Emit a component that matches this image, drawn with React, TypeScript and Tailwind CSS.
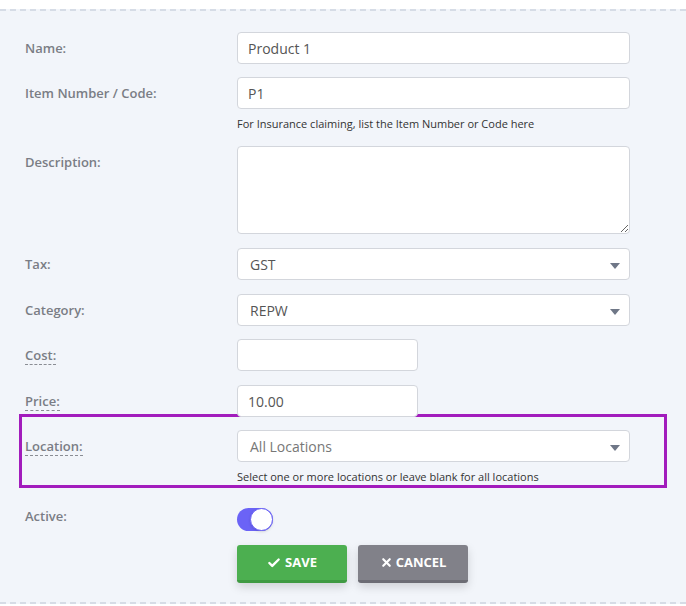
import { Check, X } from "lucide-react";

const labelCls =
  "w-[212px] shrink-0 text-[13px] font-semibold leading-[32px] text-[#7a7d85]";
const inputCls =
  "h-[32px] rounded-[4px] border border-[#d3d6dc] bg-white px-[10px] text-[14px] text-[#555] outline-none";

function Caret() {
  return (
    <svg width="10" height="6" viewBox="0 0 10 6" className="absolute right-[9px] top-[14px]">
      <path d="M0 0h10L5 6z" fill="#6f7787" />
    </svg>
  );
}

function SelectBox({ value, muted }: { value: string; muted?: boolean }) {
  return (
    <div className={`relative flex w-[393px] items-center ${inputCls} pl-[12px]`}>
      <span className={muted ? "text-[#777]" : "text-[#555]"}>{value}</span>
      <Caret />
    </div>
  );
}

function HelpText({ children }: { children: string }) {
  return <p className="mt-[7px] text-[11px] leading-[16px] text-[#333]">{children}</p>;
}

function Tip({ children }: { children: string }) {
  return (
    <span className="inline-block border-b border-dashed border-[#8a8d94] leading-[17px]">{children}</span>
  );
}

export default function App() {
  return (
    <div className="h-[606px] bg-white pt-[9px] font-['Open_Sans',sans-serif]">
      <div className="border-y-2 border-dashed border-[#d6dce6] bg-[#f2f5fa] pb-[19px] pl-[25px] pt-[21px]">
        <div className="mb-[13px] flex">
          <div className={labelCls}>Name:</div>
          <input className={`w-[393px] ${inputCls}`} defaultValue="Product 1" />
        </div>

        <div className="mb-[14px] flex">
          <div className={labelCls}>Item Number / Code:</div>
          <div>
            <input className={`w-[393px] ${inputCls}`} defaultValue="P1" />
            <HelpText>For Insurance claiming, list the Item Number or Code here</HelpText>
          </div>
        </div>

        <div className="mb-[14px] flex">
          <div className={labelCls}>Description:</div>
          <textarea className="block h-[88px] w-[393px] rounded-[4px] border border-[#d3d6dc] bg-white px-[10px] py-[6px] text-[14px] text-[#555] outline-none" />
        </div>

        <div className="mb-[14px] flex">
          <div className={labelCls}>Tax:</div>
          <SelectBox value="GST" />
        </div>

        <div className="mb-[13px] flex">
          <div className={labelCls}>Category:</div>
          <SelectBox value="REPW" />
        </div>

        <div className="mb-[14px] flex">
          <div className={labelCls}>
            <Tip>Cost:</Tip>
          </div>
          <input className={`w-[181px] ${inputCls}`} />
        </div>

        <div className="flex">
          <div className={labelCls}>
            <Tip>Price:</Tip>
          </div>
          <input className={`w-[181px] ${inputCls}`} defaultValue="10.00" />
        </div>

        <div className="-ml-[6px] -mt-[3px] w-[648px] border-[3px] border-[#a21cbc] pb-[1px] pl-[3px] pt-[13px]">
          <div className="flex">
            <div className={labelCls}>
              <Tip>Location:</Tip>
            </div>
            <div>
              <SelectBox value="All Locations" muted />
              <p className="mt-[7px] text-[11px] leading-[15px] text-[#333]">
                Select one or more locations or leave blank for all locations
              </p>
            </div>
          </div>
        </div>

        <div className="mt-[12px] flex">
          <div className={`${labelCls} leading-[32px]`}>Active:</div>
          <button className="relative mt-[8px] h-[23px] w-[36px] rounded-full bg-[#6b63f6]">
            <span className="absolute right-0 top-0 h-[23px] w-[23px] rounded-full border-[1.5px] border-[#6b63f6] bg-white shadow-sm" />
          </button>
        </div>

        <div className="ml-[212px] mt-[13px] flex gap-[11px]">
          <button className="flex h-[38px] w-[110px] items-center justify-center gap-[4px] rounded-[3px] border-b-[3px] border-[#3f9a42] bg-[#4caf50] text-[13px] font-bold text-white shadow-[0_4px_10px_rgba(0,0,0,0.15)]">
            <Check size={14} strokeWidth={4} />
            SAVE
          </button>
          <button className="flex h-[38px] w-[110px] items-center justify-center gap-[3px] rounded-[3px] border-b-[3px] border-[#6c6c74] bg-[#818189] text-[13px] font-bold text-white shadow-[0_4px_10px_rgba(0,0,0,0.15)]">
            <X size={13} strokeWidth={4} />
            CANCEL
          </button>
        </div>
      </div>
    </div>
  );
}
